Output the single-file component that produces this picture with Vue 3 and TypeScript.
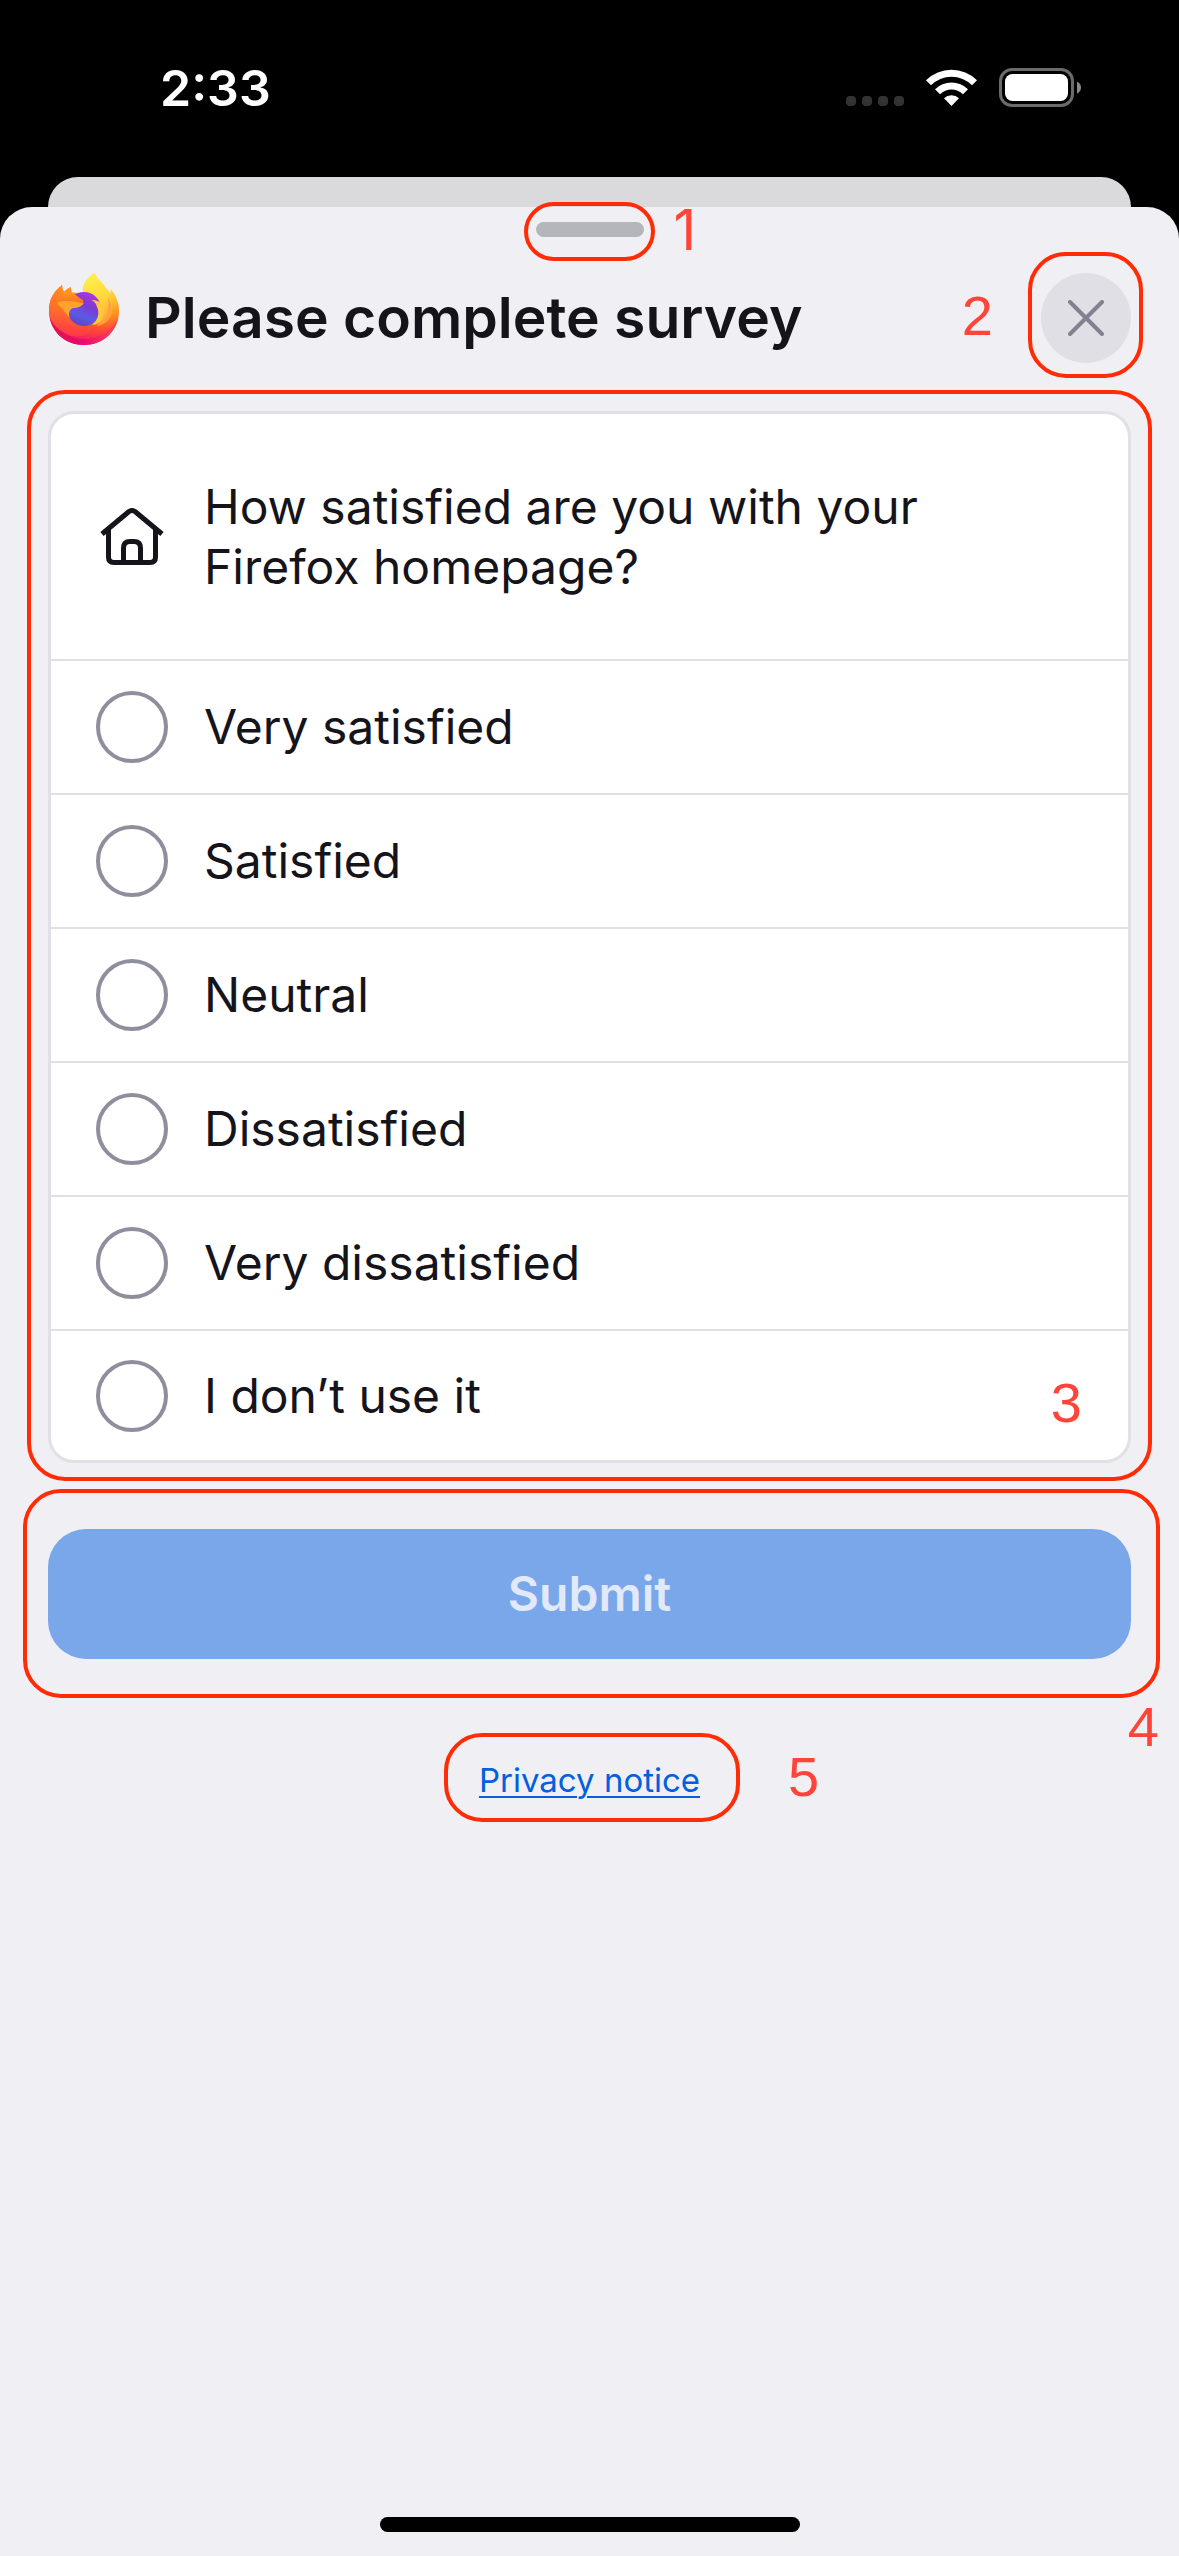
<script setup lang="ts">
import { ref } from 'vue'

interface Option {
  id: string
  label: string
}

const options: Option[] = [
  { id: 'very-satisfied', label: 'Very satisfied' },
  { id: 'satisfied', label: 'Satisfied' },
  { id: 'neutral', label: 'Neutral' },
  { id: 'dissatisfied', label: 'Dissatisfied' },
  { id: 'very-dissatisfied', label: 'Very dissatisfied' },
  { id: 'not-used', label: 'I don’t use it' },
]

const selected = ref<string | null>(null)
</script>

<template>
  <div class="screen">
    <header class="status">
      <time class="clock">2:33</time>
      <div class="indicators">
        <span class="dots"><i v-for="n in 4" :key="n" class="dot"></i></span>
        <svg class="wifi" viewBox="0 0 51 37" aria-hidden="true">
          <path d="M0 11.2A36.5 36.5 0 0 1 51 11.2L46 16.2A29 29 0 0 0 5 16.2Z" />
          <path d="M9 20.2A23.5 23.5 0 0 1 42 20.2L37 25.2A16.5 16.5 0 0 0 14 25.2Z" />
          <path d="M18 29.2A11 11 0 0 1 33 29.2L25.5 37Z" />
        </svg>
        <svg class="battery" viewBox="0 0 82 39" aria-hidden="true">
          <rect x="1.5" y="1.5" width="72" height="36" rx="11.5" fill="none" stroke="#6b6b6b" stroke-width="3" />
          <rect x="6" y="6" width="63" height="27" rx="7.5" fill="#fff" />
          <path d="M78 13.5Q82 15.500 82 19.500Q82 23.500 78 25.500Z" fill="#8a8a8a" />
        </svg>
      </div>
    </header>

    <div class="backdrop-card"></div>

    <main class="sheet">
      <div class="grabber-wrap">
        <div class="grabber"></div>
        <span class="ring ring-grabber"></span>
        <span class="mark mark-1">1</span>
      </div>

      <div class="heading">
        <svg class="logo" viewBox="0 0 70 72" aria-hidden="true">
          <defs>
            <radialGradient id="body" gradientUnits="userSpaceOnUse" cx="56" cy="8" r="68">
              <stop offset="0" stop-color="#ffe847" />
              <stop offset="0.3" stop-color="#ffc52f" />
              <stop offset="0.52" stop-color="#ff8a1f" />
              <stop offset="0.74" stop-color="#ff4438" />
              <stop offset="1" stop-color="#f01070" />
            </radialGradient>
            <linearGradient id="rim" x1="0" y1="0" x2="1" y2="0">
              <stop offset="0" stop-color="#d8164a" />
              <stop offset="0.5" stop-color="#e80a70" />
              <stop offset="1" stop-color="#ff4a50" />
            </linearGradient>
            <linearGradient id="face" x1="0" y1="0" x2="0" y2="1">
              <stop offset="0" stop-color="#ff9a1c" />
              <stop offset="0.45" stop-color="#ff7a22" />
              <stop offset="1" stop-color="#ff3a45" />
            </linearGradient>
            <linearGradient id="globe" x1="0.75" y1="0" x2="0.3" y2="1">
              <stop offset="0" stop-color="#b434e8" />
              <stop offset="0.4" stop-color="#7c3ad2" />
              <stop offset="0.7" stop-color="#5c5ae6" />
              <stop offset="1" stop-color="#6040c0" />
            </linearGradient>
            <linearGradient id="flame" x1="0.4" y1="0" x2="0.6" y2="1">
              <stop offset="0" stop-color="#fff04a" />
              <stop offset="0.5" stop-color="#ffd83a" />
              <stop offset="1" stop-color="#ff9d35" />
            </linearGradient>
          </defs>
          <path fill="url(#body)" d="M13 12C13 15 14 17 15 19C17 17 19 15 22 14C22 16 22 18 23 19.500L34 20C33 12 38 4 45.700 0C47 5 51 7 54 11C57 15 60 18 61.500 21L61.500 16C67 22 70 29 70 38C70 57 55 72 35 72C15 72 0 57 0 38C0 27 4 19 13 12Z" />
          <path fill="url(#rim)" d="M1 45C8 58 20 66 35 66C50 66 63 58 69 45C66 61 52 72 35 72C18 72 4 61 1 45Z" />
          <path fill="url(#face)" d="M13 12C13 15 14 17 15 19C17 17 19 15 22 14C22 16 22 18 23 19.500L29 24L22 38C22 50 32 56 44 52C42 62 30 66 20 62C8 57 0 49 0 38C0 27 4 19 13 12Z" opacity="0.85" />
          <path fill="url(#flame)" d="M45.700 0C47 5 51 7 54 11C59 18 64 27 63 38C62 46 56 52 48 53C54 45 54 34 44 27L34.500 19.500C33 12 38 4 45.700 0Z" />
          <circle cx="35" cy="36" r="17" fill="url(#globe)" />
          <path fill="url(#face)" d="M14 19L23 19.500C27 22 29 24 34 27L34.500 31L26 34L19 37C15 34 11 31 9 28Z" />
          <path fill="#ffa32b" d="M9 29C16 27 25 28 34.500 30C33 34 28 35 24 35C20 37 19 41 21 45C17 42 15 36 9 32Z" />
          <path fill="#ffc83a" d="M42.500 27C52 26 57 35 54 43C52 49 48 52 43 52C49 47 51 40 48 34C47 30 45 28 42.500 27Z" />
          <path fill="#ff9d3c" opacity="0.8" d="M59 24C65 34 63 45 54 51C57 45 60 38 59 24Z" />
        </svg>
        <h1 class="title">Please complete survey</h1>
        <div class="close-wrap">
          <button class="close" type="button" aria-label="Close">
            <svg viewBox="0 0 36 36" aria-hidden="true">
              <path d="M2 2L34 34M34 2L2 34" stroke="#82818f" stroke-width="4" stroke-linecap="round" />
            </svg>
          </button>
          <span class="ring ring-close"></span>
          <span class="mark mark-2">2</span>
        </div>
      </div>

      <form class="survey" @submit.prevent>
        <div class="card-wrap">
          <div class="card" role="radiogroup" aria-labelledby="question">
            <div class="question">
              <svg class="house" viewBox="0 0 64 58" fill="none" stroke="#15141a" stroke-width="5" aria-hidden="true">
                <path d="M2 26L29 3.500Q32 1.500 35 3.500L62 26" stroke-linejoin="round" />
                <path d="M8.500 21V49Q8.500 54.500 14 54.500H50Q55.500 54.500 55.500 49V21" />
                <path d="M23.500 54V40Q23.500 33.500 30 33.500H34Q40.500 33.500 40.500 40V54" />
              </svg>
              <h2 id="question" class="question-text">How satisfied are you with your Firefox homepage?</h2>
            </div>
            <label v-for="option in options" :key="option.id" class="option">
              <input v-model="selected" class="radio" type="radio" name="satisfaction" :value="option.id" />
              <span>{{ option.label }}</span>
            </label>
          </div>
          <span class="ring ring-card"></span>
          <span class="mark mark-3">3</span>
        </div>

        <div class="submit-wrap">
          <button class="submit" type="submit">Submit</button>
          <span class="ring ring-submit"></span>
          <span class="mark mark-4">4</span>
        </div>
      </form>

      <div class="privacy-wrap">
        <a class="privacy" href="#privacy">Privacy notice</a>
        <span class="ring ring-privacy"></span>
        <span class="mark mark-5">5</span>
      </div>

      <div class="home-indicator"></div>
    </main>
  </div>
</template>

<style>
body {
  background: #000;
}
</style>

<style scoped>
.screen {
  display: flex;
  flex-direction: column;
  min-height: 100vh;
  font-family: Inter, 'Liberation Sans', sans-serif;
  color: #15141a;
  background: #000;
}

.status {
  display: flex;
  justify-content: space-between;
  align-items: center;
  box-sizing: border-box;
  height: 177px;
  padding: 0 98px 2px 160px;
  color: #fff;
}

.clock {
  font-size: 50px;
  line-height: 60px;
  font-weight: 600;
}

.indicators {
  display: flex;
  align-items: center;
}

.dots {
  display: flex;
  gap: 6px;
  align-self: flex-end;
  margin: 0 22px 1px 0;
}

.dot {
  width: 10px;
  height: 10px;
  border-radius: 4px;
  background: #333;
}

.wifi {
  width: 51px;
  height: 37px;
  margin-right: 22px;
  fill: #fff;
}

.battery {
  width: 82px;
  height: 39px;
}

.backdrop-card {
  height: 30px;
  margin: 0 48px;
  border-radius: 30px 30px 0 0;
  background: #dadadc;
}

.sheet {
  display: flex;
  flex: 1;
  flex-direction: column;
  padding: 15px 48px 24px;
  border-radius: 32px 32px 0 0;
  background: #f0eff4;
}

.grabber-wrap,
.privacy-wrap {
  position: relative;
  align-self: center;
}

.grabber {
  width: 108px;
  height: 15px;
  border-radius: 8px;
  background: #b5b5bc;
}

.heading {
  display: flex;
  align-items: center;
  margin-top: 36px;
}

.logo {
  align-self: flex-start;
  width: 72px;
  height: 72px;
  margin-right: 25px;
}

.title {
  flex: 1;
  margin: 0;
  font-size: 57px;
  line-height: 72px;
  font-weight: 600;
}

.close-wrap,
.card-wrap,
.submit-wrap {
  position: relative;
}

.close {
  display: flex;
  align-items: center;
  justify-content: center;
  width: 90px;
  height: 90px;
  padding: 0;
  border: 0;
  border-radius: 50%;
  background: #e0dfe6;
}

.close svg {
  width: 36px;
  height: 36px;
}

.survey {
  display: flex;
  flex-direction: column;
  gap: 66px;
  margin-top: 48px;
}

.card {
  border: 3px solid #e0e0e6;
  border-radius: 26px;
  background: #fff;
}

.question {
  display: flex;
  align-items: center;
  gap: 40px;
  height: 245px;
  padding: 0 120px 0 49px;
}

.house {
  flex: none;
  width: 64px;
  height: 58px;
}

.question-text {
  margin: 0;
  font-size: 48px;
  line-height: 60px;
  font-weight: 400;
}

.option {
  display: flex;
  align-items: center;
  gap: 36px;
  height: 132px;
  padding: 0 45px;
  border-top: 2px solid #e0e0e6;
  font-size: 48px;
  line-height: 60px;
}

.option:last-child {
  height: 129px;
}

.radio {
  appearance: none;
  flex: none;
  width: 72px;
  height: 72px;
  margin: 0;
  border: 4px solid #8f8e9d;
  border-radius: 50%;
}

.radio:checked {
  border-width: 20px;
  border-color: #0060df;
}

.submit {
  width: 100%;
  height: 130px;
  padding: 0;
  border: 0;
  border-radius: 38px;
  background: #79a7ea;
  color: #e1e9fb;
  font-family: inherit;
  font-size: 48px;
  line-height: 60px;
  font-weight: 600;
}

.privacy-wrap {
  margin-top: 101px;
}

.privacy {
  display: block;
  color: #0060df;
  font-size: 33px;
  line-height: 40px;
  text-decoration-thickness: 2px;
  text-underline-offset: 4px;
}

.home-indicator {
  align-self: center;
  width: 420px;
  height: 15px;
  margin-top: auto;
  border-radius: 8px;
  background: #000;
}

/* Numbered callouts drawn over the survey */
.ring {
  position: absolute;
  border: 4px solid #ff2c05;
  border-radius: 38px;
  pointer-events: none;
}

.ring-grabber {
  inset: -20px -11px -24px -12px;
  border-radius: 30px;
}

.ring-close {
  inset: -21px -12px -15px -13px;
}

.ring-card {
  inset: -21px -21px -18px;
}

.ring-submit {
  inset: -40px -29px -39px -25px;
}

.ring-privacy {
  inset: -27px -40px -22px -35px;
}

.mark {
  position: absolute;
  color: #ff453a;
  font-family: 'Liberation Sans', Arial, sans-serif;
  font-size: 56px;
  line-height: 64px;
}

/* Inter's figure one has no foot */
.mark-1 {
  top: -24px;
  left: 138px;
  font-family: Inter, sans-serif;
}

.mark-2 {
  top: 11px;
  right: 138px;
}

.mark-3 {
  right: 49px;
  bottom: 28px;
}

.mark-4 {
  top: 166px;
  right: -28px;
}

.mark-5 {
  top: -15px;
  left: 309px;
}
</style>
